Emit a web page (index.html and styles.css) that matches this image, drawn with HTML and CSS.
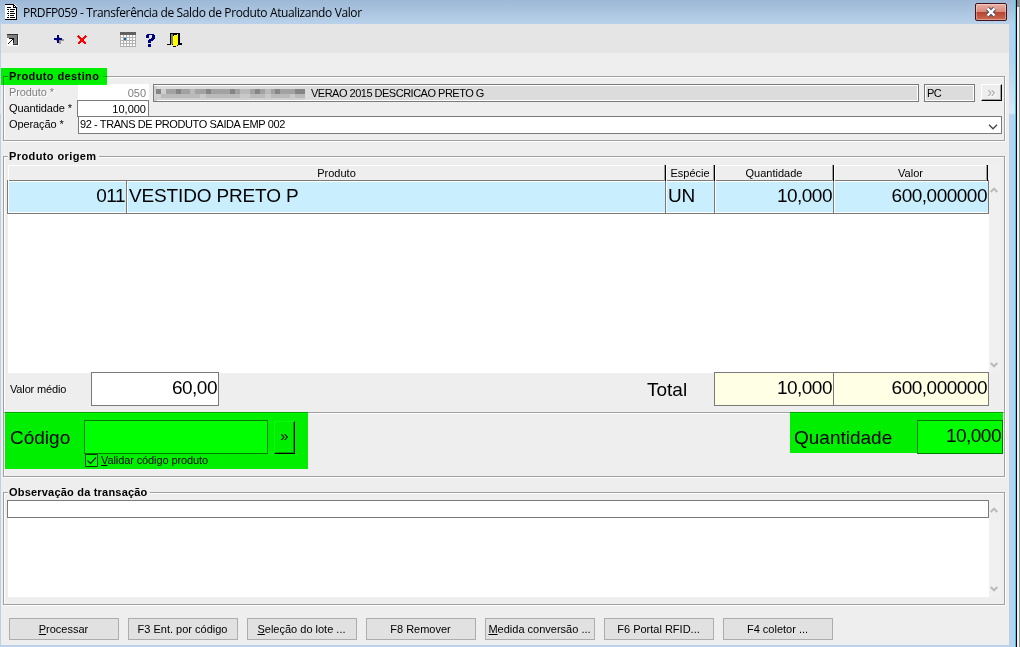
FILE: index.html
```html
<!DOCTYPE html>
<html lang="pt-BR">
<head>
    <meta charset="UTF-8">
    <meta name="viewport" content="width=device-width, initial-scale=1.0">
    <title>PRDFP059 - Transferência de Saldo de Produto Atualizando Valor</title>
    <link rel="stylesheet" href="styles.css">
</head>
<body>
    <div class="desktop">
    <div class="window">
        <div class="titlebar">
            <svg class="app-icon" width="12" height="16" viewBox="0 0 12 16" shape-rendering="crispEdges">
                <path fill="#fff" d="M0 0h9l3 3v13H0z"/>
                <path fill="#000" d="M0 0h9v1H0zM9 1h1v1H9zM10 2h1v1h-1zM11 3h1v13h-1zM0 15h12v1H0zM8 1h1v3H8zM8 3h3v1H8zM2 3h4v1H2zM2 5h2v1H2zM5 5h5v1H5zM3 7h1v1H3zM5 7h4v1H5zM2 9h2v1H2zM5 9h5v1H5zM3 11h1v1H3zM5 11h4v1H5zM2 13h2v1H2zM5 13h5v1H5z"/>
            </svg>
            <span class="title">PRDFP059 - Transferência de Saldo de Produto Atualizando Valor</span>
            <div class="close">
                <svg width="12" height="10" viewBox="0 0 12 10">
                    <path d="M2.5 1.5l7 7M9.5 1.5l-7 7" stroke="#535666" stroke-width="4.6"/>
                    <path d="M2.5 1.5l7 7M9.5 1.5l-7 7" stroke="#fff" stroke-width="2.4"/>
                </svg>
            </div>
        </div>

        <div class="toolbar">
            <svg width="200" height="29" viewBox="0 0 200 29" shape-rendering="crispEdges">
                <!-- atalho -->
                <path fill="#fff" d="M7 11h12v11H7z"/>
                <path fill="#808080" d="M7 10h10v10h-4v-6H7z"/>
                <path fill="#333" d="M7 10h11v1H7zM17 10h1v11h-1zM13 20h5v1h-5z"/>
                <path fill="#111" d="M9 14h5v5h-1v-3h-1v1h-1v1h-1v1H9v1H8v-1h1v-1h1v-1h1v-1h1v-1H9z"/>
                <!-- incluir -->
                <path fill="#999" d="M58 13h2v2h4v2h-3v3h-2v-3h-3v-1h2z"/>
                <path fill="#000080" d="M57 11h2v3h3v2h-3v3h-2v-3h-3v-2h3z"/>
                <!-- excluir -->
                <path d="M78 12l8 8M86 12l-8 8" stroke="#f00" stroke-width="2.2"/>
                <!-- grade -->
                <path fill="#b0b0b0" d="M120 11h16v12h-16z"/>
                <path fill="#fff" d="M121 11h2v2h-2zM124 11h2v2h-2zM127 11h2v2h-2zM130 11h2v2h-2zM133 11h2v2h-2zM121 14h2v2h-2zM127 14h2v2h-2zM130 14h2v2h-2zM133 14h2v2h-2zM121 17h2v2h-2zM124 17h2v2h-2zM127 17h2v2h-2zM130 17h2v2h-2zM133 17h2v2h-2zM121 20h2v2h-2zM124 20h2v2h-2zM127 20h2v2h-2zM130 20h2v2h-2zM133 20h2v2h-2z"/>
                <path fill="#606060" d="M120 8h16v3h-16z"/>
                <path fill="#1464a0" d="M124 14h2v2h-2z"/>
                <!-- ajuda -->
                <path fill="#000080" d="M147 10h7v1h1v4h-1v1h-1v1h-2v2h-3v-3h1v-1h2v-1h1v-3h-3v3h-3v-3h1zM148 20h3v3h-3z"/>
                <!-- sair -->
                <path fill="#000" d="M170 9h10v10h2v2h-4v1h-2v1h-3v-2h-1v-9h-1v9h-4v-1h3z"/>
                <path fill="#808080" d="M171 10h2v10h-2z"/>
                <path fill="#ff0" d="M173 12h1v-1h3v-1h1v11h-1v1h-4z"/>
            </svg>
        </div>

        <div class="content">
            <div class="group destino">
                <div class="legend wide">Produto destino</div>
                <div class="mark mark-legend"></div>
                <div class="row">
                    <div class="label disabled">Produto *</div>
                    <div class="field code">050</div>
                    <div class="field readonly desc">
                        <svg class="pixels" width="152" height="15" viewBox="0 0 152 15" shape-rendering="crispEdges">
                            <path fill="#cfcfcf" d="M0 0h3v15H0zM3 3h148v11H3z"/>
                            <path fill="#a2a2a2" d="M12 3h139v5H12z"/>
                            <path fill="#bababa" d="M7 8h144v4H7zM36 3h5v5h-5zM86 3h10v5H86zM111 3h6v5h-6z"/>
                            <path fill="#858585" d="M2 3h5v5H2zM22 3h5v5h-5zM52 3h5v5h-5zM76 3h5v5h-5zM101 3h5v5h-5zM121 3h5v5h-5zM141 3h10v5h-10z"/>
                            <path fill="#c8c8c8" d="M46 8h6v4h-6zM86 8h10v4H86zM111 8h6v4h-6zM136 8h5v4h-5z"/>
                        </svg>
                        <span>VERAO 2015 DESCRICAO PRETO G</span>
                    </div>
                    <div class="field readonly unit">PC</div>
                    <div class="more off">»</div>
                </div>
                <div class="row">
                    <div class="label">Quantidade *</div>
                    <div class="field qty">10,000</div>
                </div>
                <div class="row">
                    <div class="label">Operação *</div>
                    <div class="field select">
                        <span>92 - TRANS DE PRODUTO SAIDA EMP 002</span>
                        <svg width="10" height="6" viewBox="0 0 10 6"><path d="M1 .8l4 4 4-4" fill="none" stroke="#444" stroke-width="1.3"/></svg>
                    </div>
                </div>
            </div>

            <div class="group origem">
                <div class="legend wide">Produto origem</div>
                <div class="grid-area">
                    <div class="grid">
                        <div class="thead">
                            <div class="th">Produto</div>
                            <div class="th">Espécie</div>
                            <div class="th">Quantidade</div>
                            <div class="th">Valor</div>
                        </div>
                        <div class="tr">
                            <div class="td right">011</div>
                            <div class="td name">VESTIDO PRETO P</div>
                            <div class="td name">UN</div>
                            <div class="td right">10,000</div>
                            <div class="td right">600,000000</div>
                        </div>
                    </div>
                    <div class="scroll">
                        <svg width="8" height="6" viewBox="0 0 8 6"><path d="M.7 5L4 1.7 7.3 5" fill="none" stroke="#bbb" stroke-width="2"/></svg>
                        <svg width="8" height="6" viewBox="0 0 8 6"><path d="M.7 1L4 4.3 7.3 1" fill="none" stroke="#bbb" stroke-width="2"/></svg>
                    </div>
                </div>
                <div class="totals">
                    <div class="avg-label">Valor médio</div>
                    <div class="big avg">60,00</div>
                    <div class="total-label">Total</div>
                    <div class="big sum sum-qty">10,000</div>
                    <div class="big sum sum-val">600,000000</div>
                </div>
                <div class="entry">
                    <div class="mark mark-code"></div>
                    <div class="mark mark-qty"></div>
                    <div class="mark mark-field"></div>
                    <div class="code-label">Código</div>
                    <div class="code-col">
                        <div class="code-line">
                            <div class="big code-input"></div>
                            <div class="more">»</div>
                        </div>
                        <div class="check">
                            <svg width="13" height="13" viewBox="0 0 13 13"><path d="M.5.5h12v12H.5z" fill="#fff" stroke="#333"/><path d="M2.5 6.5l3 3 5.5-6" fill="none" stroke="#333" stroke-width="1.3"/></svg>
                            <span><u>V</u>alidar código produto</span>
                        </div>
                    </div>
                    <div class="qty-label">Quantidade</div>
                    <div class="big qty-input">10,000</div>
                </div>
            </div>

            <div class="group obs">
                <div class="legend">Observação da transação</div>
                <div class="obs-text"><div class="obs-line"></div></div>
                <div class="scroll">
                    <svg width="8" height="6" viewBox="0 0 8 6"><path d="M.7 5L4 1.7 7.3 5" fill="none" stroke="#bbb" stroke-width="2"/></svg>
                    <svg width="8" height="6" viewBox="0 0 8 6"><path d="M.7 1L4 4.3 7.3 1" fill="none" stroke="#bbb" stroke-width="2"/></svg>
                </div>
            </div>

            <div class="buttons">
                <div class="btn"><u>P</u>rocessar</div>
                <div class="btn">F3 Ent. por código</div>
                <div class="btn"><u>S</u>eleção do lote ...</div>
                <div class="btn">F8 Remover</div>
                <div class="btn"><u>M</u>edida conversão ...</div>
                <div class="btn">F6 Portal RFID...</div>
                <div class="btn">F4 coletor ...</div>
            </div>
        </div>
    </div>
    <div class="behind"></div>
    </div>
</body>
</html>
```
FILE: styles.css
```css
* {
box-sizing: border-box;
}

body {
margin: 0;
font-family: "Liberation Sans", Arial, sans-serif;
font-size: 11px;
color: #000;
overflow: hidden;
}

svg {
display: block;
flex: none;
}

.desktop {
display: flex;
width: 1020px;
height: 647px;
}

.window {
display: flex;
flex-direction: column;
width: 1017px;
height: 647px;
background: linear-gradient(#9db8d6, #b9d1ea 24px, #b9d1ea 60px, #d9e6f4 113px, #b9d1ea 115px);
border-right: 1px solid #000;
box-shadow: inset -1px 0 #35c5ec;
padding: 0 7px 2px 1px;
}

.behind {
width: 3px;
background: linear-gradient(90deg, #f4f4f4 2px, #999 2px);
border-top: 7px solid #888;
}

.titlebar {
display: flex;
height: 24px;
flex: none;
}

.app-icon {
margin: 4px 0 0 4px;
}

.title {
font-family: "Open Sans", "Noto Sans", sans-serif;
font-size: 12px;
line-height: 26px;
margin-left: 6px;
white-space: nowrap;
letter-spacing: -0.38px;
}

.close {
display: flex;
align-items: center;
justify-content: center;
width: 32px;
height: 18px;
margin: 3px 2px 0 auto;
border: 1px solid #43131d;
border-radius: 2px;
background: linear-gradient(#eab0a5, #d98b7c 48%, #b9412b 50%, #c96b55);
box-shadow: inset 0 0 0 1px rgba(255, 255, 255, .35);
}

.toolbar {
height: 29px;
flex: none;
background: #e5e5e5;
}

.toolbar svg {
margin-left: -1px;
}

.content {
flex: 1;
background: #eee;
padding: 23px 4px 0 2px;
}

.group {
position: relative;
border: 1px solid #a0a0a0;
box-shadow: inset 1px 1px #fff, 1px 1px #fff;
}

/* titulo por cima da borda do grupo */
.legend {
position: absolute;
top: -8px;
left: 4px;
padding: 0 2px 0 1px;
line-height: 15px;
font-weight: bold;
letter-spacing: 0.2px;
background: #eee;
white-space: nowrap;
}

.wide {
letter-spacing: 0.4px;
}

.mark {
position: absolute;
background: #0f0;
mix-blend-mode: multiply;
z-index: 2;
}

.mark-legend {
top: -9px;
left: -3px;
width: 106px;
height: 17px;
}

.destino {
height: 65px;
padding: 7px 2px 0 5px;
}

.destino .legend {
padding-right: 4px;
}

.row {
display: flex;
height: 16px;
}

.label {
width: 69px;
flex: none;
line-height: 16px;
letter-spacing: -0.1px;
white-space: nowrap;
}

.disabled {
color: #808080;
text-shadow: 1px 1px #fff;
}

.field {
flex: none;
border: 1px solid #7a7a7a;
background: #fff;
line-height: 16px;
padding: 0 2px;
white-space: nowrap;
}

.code {
width: 71px;
height: 16px;
border-color: #fff;
text-align: right;
color: #808080;
}

.readonly {
background: #dcdcdc;
height: 18px;
box-shadow: inset 0 0 0 1px #fff;
letter-spacing: -0.5px;
}

.desc {
display: flex;
width: 766px;
margin-left: 4px;
padding: 0;
}

.pixels {
margin: 1px 5px 0 0;
}

.unit {
width: 51px;
margin: 0 6px 0 5px;
}

.more {
width: 22px;
height: 17px;
flex: none;
background: #eee;
border: 1px solid;
border-color: #fff #000 #000 #fff;
box-shadow: inset -1px -1px #a0a0a0;
text-align: center;
line-height: 13px;
font-size: 15px;
}

.row .more {
width: 21px;
}

.off {
color: #aaa;
text-shadow: 1px 1px #fff;
}

.qty {
width: 72px;
height: 17px;
margin-left: -1px;
text-align: right;
}

.select {
display: flex;
align-items: center;
justify-content: space-between;
width: 924px;
height: 18px;
padding: 0 3px 0 1px;
letter-spacing: -0.4px;
}

.select span {
margin-top: -2px;
}

.select svg {
margin-top: 4px;
}

.origem {
height: 321px;
margin-top: 15px;
padding-top: 8px;
}

.grid-area {
display: flex;
height: 208px;
padding-left: 3px;
}

.grid {
width: 982px;
background: linear-gradient(#fff, #fff) 1px 0 no-repeat;
}

.thead {
display: grid;
grid-template-columns: 658px 49px 119px 154px;
height: 15px;
padding-left: 1px;
background: #eee;
}

.th {
border-right: 1px solid #000;
box-shadow: inset -1px -1px #a0a0a0, inset 1px 1px #fff;
line-height: 17px;
text-align: center;
}

.tr {
display: grid;
grid-template-columns: 119px 539px 49px 119px 154px;
height: 34px;
border: 1px solid #7a7a7a;
background: #c9efff;
}

.td {
border-right: 1px solid #7a7a7a;
box-shadow: inset 1px 1px #fff, inset 0 -1px #fff;
padding: 0 1px 0 2px;
font-size: 19px;
line-height: 30px;
letter-spacing: -0.5px;
white-space: nowrap;
}

.td:last-child {
border-right: 0;
}

.name {
letter-spacing: -0.15px;
}

.right {
text-align: right;
}

.scroll {
display: flex;
flex-direction: column;
justify-content: space-between;
width: 12px;
background: #f0f0f0;
padding: 22px 0 5px 1px;
}

.totals {
display: flex;
height: 39px;
padding-left: 6px;
}

.avg-label {
width: 81px;
line-height: 32px;
letter-spacing: -0.15px;
}

.big {
height: 34px;
flex: none;
margin-top: -1px;
border: 1px solid #7a7a7a;
background: #fff;
font-size: 19px;
line-height: 30px;
letter-spacing: -0.5px;
text-align: right;
padding-right: 1px;
}

.avg {
width: 128px;
}

.total-label {
width: 67px;
margin-left: 428px;
font-size: 19px;
line-height: 33px;
}

.sum {
background: #ffffe6;
}

.sum-qty {
width: 120px;
}

.sum-val {
width: 155px;
border-left: 0;
}

.entry {
position: relative;
display: flex;
height: 64px;
border-top: 1px solid #a0a0a0;
box-shadow: inset 0 1px #fff;
padding: 7px 0 0 6px;
}

/* destaques em verde */
.mark-code {
top: -1px;
left: 1px;
width: 303px;
height: 57px;
}

.mark-qty {
top: -1px;
left: 786px;
width: 213px;
height: 41px;
}

.mark-field {
top: 40px;
left: 913px;
width: 86px;
height: 1px;
}

.code-label {
width: 74px;
font-size: 19px;
line-height: 35px;
}

.code-line {
display: flex;
height: 34px;
}

.code-input {
width: 184px;
margin: 0 6px 0 0;
}

.code-line .more {
width: 21px;
height: 33px;
margin-top: 1px;
line-height: 27px;
}

.check {
display: flex;
margin: 0 0 0 1px;
line-height: 13px;
}

.check span {
margin-left: 3px;
letter-spacing: -0.1px;
}

.qty-label {
margin-left: auto;
width: 123px;
font-size: 19px;
line-height: 35px;
}

.qty-input {
width: 86px;
margin: 0 1px 0 0;
}

.obs {
display: flex;
height: 113px;
margin-top: 15px;
padding: 7px 0 7px 3px;
}

.obs-text {
width: 982px;
background: linear-gradient(#fff, #fff) 1px 0 no-repeat;
}

.obs-line {
height: 18px;
border: 1px solid #7a7a7a;
}

.obs .scroll {
padding-top: 7px;
}

.buttons {
display: flex;
gap: 9px;
padding: 13px 0 0 6px;
}

.btn {
width: 110px;
height: 22px;
border: 1px solid #adadad;
background: #e1e1e1;
line-height: 21px;
text-align: center;
text-indent: -1px;
white-space: nowrap;
}
```
